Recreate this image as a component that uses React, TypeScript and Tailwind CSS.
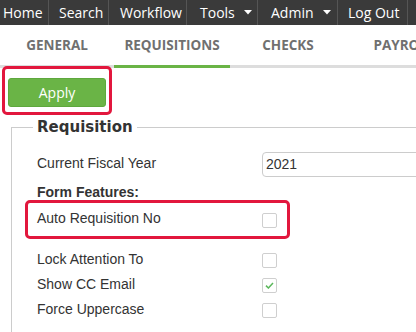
import React from "react";

const navItems: { label: string; w: string; pl: string; caret?: boolean }[] = [
  { label: "Home", w: "w-[49px]", pl: "pl-[3px]" },
  { label: "Search", w: "w-[60px]", pl: "pl-[10px]" },
  { label: "Workflow", w: "w-[78px]", pl: "pl-[11px]" },
  { label: "Tools", w: "w-[71px]", pl: "pl-[13px]", caret: true },
  { label: "Admin", w: "w-[80px]", pl: "pl-[13px]", caret: true },
  { label: "Log Out", w: "w-[70px]", pl: "pl-[10px]" },
];

function Caret() {
  return (
    <svg width="8" height="5" viewBox="0 0 8 5" className="ml-[9px]">
      <path d="M0 0 L8 0 L4 4.5 Z" fill="#ffffff" />
    </svg>
  );
}

function Checkbox({ checked }: { checked?: boolean }) {
  return (
    <div className="w-[15px] h-[15px] border border-[#cfcfcf] rounded-[2px] bg-white flex items-center justify-center">
      {checked && (
        <svg width="9" height="7" viewBox="0 0 9 7">
          <path d="M1 3.6 L3.4 6 L8 1" fill="none" stroke="#5cb85c" strokeWidth="1.5" />
        </svg>
      )}
    </div>
  );
}

const label = "text-[14px] leading-[16px] text-[#333]";
const sans = { fontFamily: '"Liberation Sans", Arial, sans-serif' };

export default function App() {
  return (
    <div className="w-[416px] h-[332px] overflow-hidden bg-white relative">
      {/* Top nav */}
      <div
        className="flex h-[25px] bg-[#3a3a3a] text-white text-[14px]"
        style={{ fontFamily: '"Open Sans", "Noto Sans", sans-serif' }}
      >
        {navItems.map((n) => (
          <div
            key={n.label}
            className={`${n.w} ${n.pl} shrink-0 flex items-center border-r border-[#555] leading-none`}
          >
            <span>{n.label}</span>
            {n.caret && <Caret />}
          </div>
        ))}
        <div className="flex-1" />
      </div>

      {/* Tabs */}
      <div
        className="flex h-[40px] items-center text-[13.5px] font-bold text-[#707070] whitespace-nowrap"
        style={{ fontFamily: '"Open Sans", "Noto Sans", sans-serif' }}
      >
        <div className="w-[114px] shrink-0 text-center">GENERAL</div>
        <div className="w-[116px] shrink-0 text-center">REQUISITIONS</div>
        <div className="w-[116px] shrink-0 text-center">CHECKS</div>
        <div className="w-[116px] shrink-0 text-center">PAYROLL</div>
      </div>
      <div className="flex h-[3px]">
        <div className="w-[114px] bg-[#dddddd]" />
        <div className="w-[116px] bg-[#6ab446]" />
        <div className="flex-1 bg-[#dddddd]" />
      </div>

      {/* Content */}
      <div className="pl-[8px]">
        <div className="relative mt-[10px] w-[98px]">
          <button
            className="w-[98px] h-[29px] rounded-[3px] bg-[#6ab446] border border-[#5ea83d] text-white text-[14px]"
            style={{ fontFamily: '"Open Sans", "Noto Sans", sans-serif' }}
          >
            Apply
          </button>
          <div className="absolute top-[-12px] left-[-6px] w-[110px] h-[49px] border-[3px] border-[#e2173d] rounded-[5px]" />
        </div>

        <fieldset className="ml-[3px] mt-[10px] w-[500px] border border-[#cccccc]" style={sans}>
          <legend
            className="ml-[21px] px-[4px] text-[15px] leading-[20px] font-bold text-[#333]"
            style={{ fontFamily: '"DejaVu Sans", Verdana, sans-serif' }}
          >
            Requisition
          </legend>
          <div className="pl-[25px] pb-[40px]">
            <div className="mt-[15px] flex h-[25px]">
              <div className={`w-[225px] mt-[3px] ${label}`}>Current Fiscal Year</div>
              <div className="w-[220px] h-[25px] border border-[#cccccc] rounded-[4px] pl-[3px] flex items-center text-[14px] text-[#333]">
                2021
              </div>
            </div>
            <div className="mt-[7px] text-[14px] leading-[16px] font-bold text-[#333]">Form Features:</div>
            <div className="relative mt-[10px] flex h-[25px] items-start">
              <div className={`w-[225px] ${label}`}>Auto Requisition No</div>
              <div className="mt-[3px]">
                <Checkbox />
              </div>
              <div className="absolute top-[-10px] left-[-12px] w-[265px] h-[39px] border-[3px] border-[#e2173d] rounded-[5px]" />
            </div>
            <div className="mt-[16px] flex h-[25px] items-start">
              <div className={`w-[225px] ${label}`}>Lock Attention To</div>
              <div className="mt-[2px]">
                <Checkbox />
              </div>
            </div>
            <div className="flex h-[25px] items-start">
              <div className={`w-[225px] ${label}`}>Show CC Email</div>
              <div className="mt-[2px]">
                <Checkbox checked />
              </div>
            </div>
            <div className="flex h-[25px] items-start">
              <div className={`w-[225px] ${label}`}>Force Uppercase</div>
              <div className="mt-[2px]">
                <Checkbox />
              </div>
            </div>
          </div>
        </fieldset>
      </div>
    </div>
  );
}
